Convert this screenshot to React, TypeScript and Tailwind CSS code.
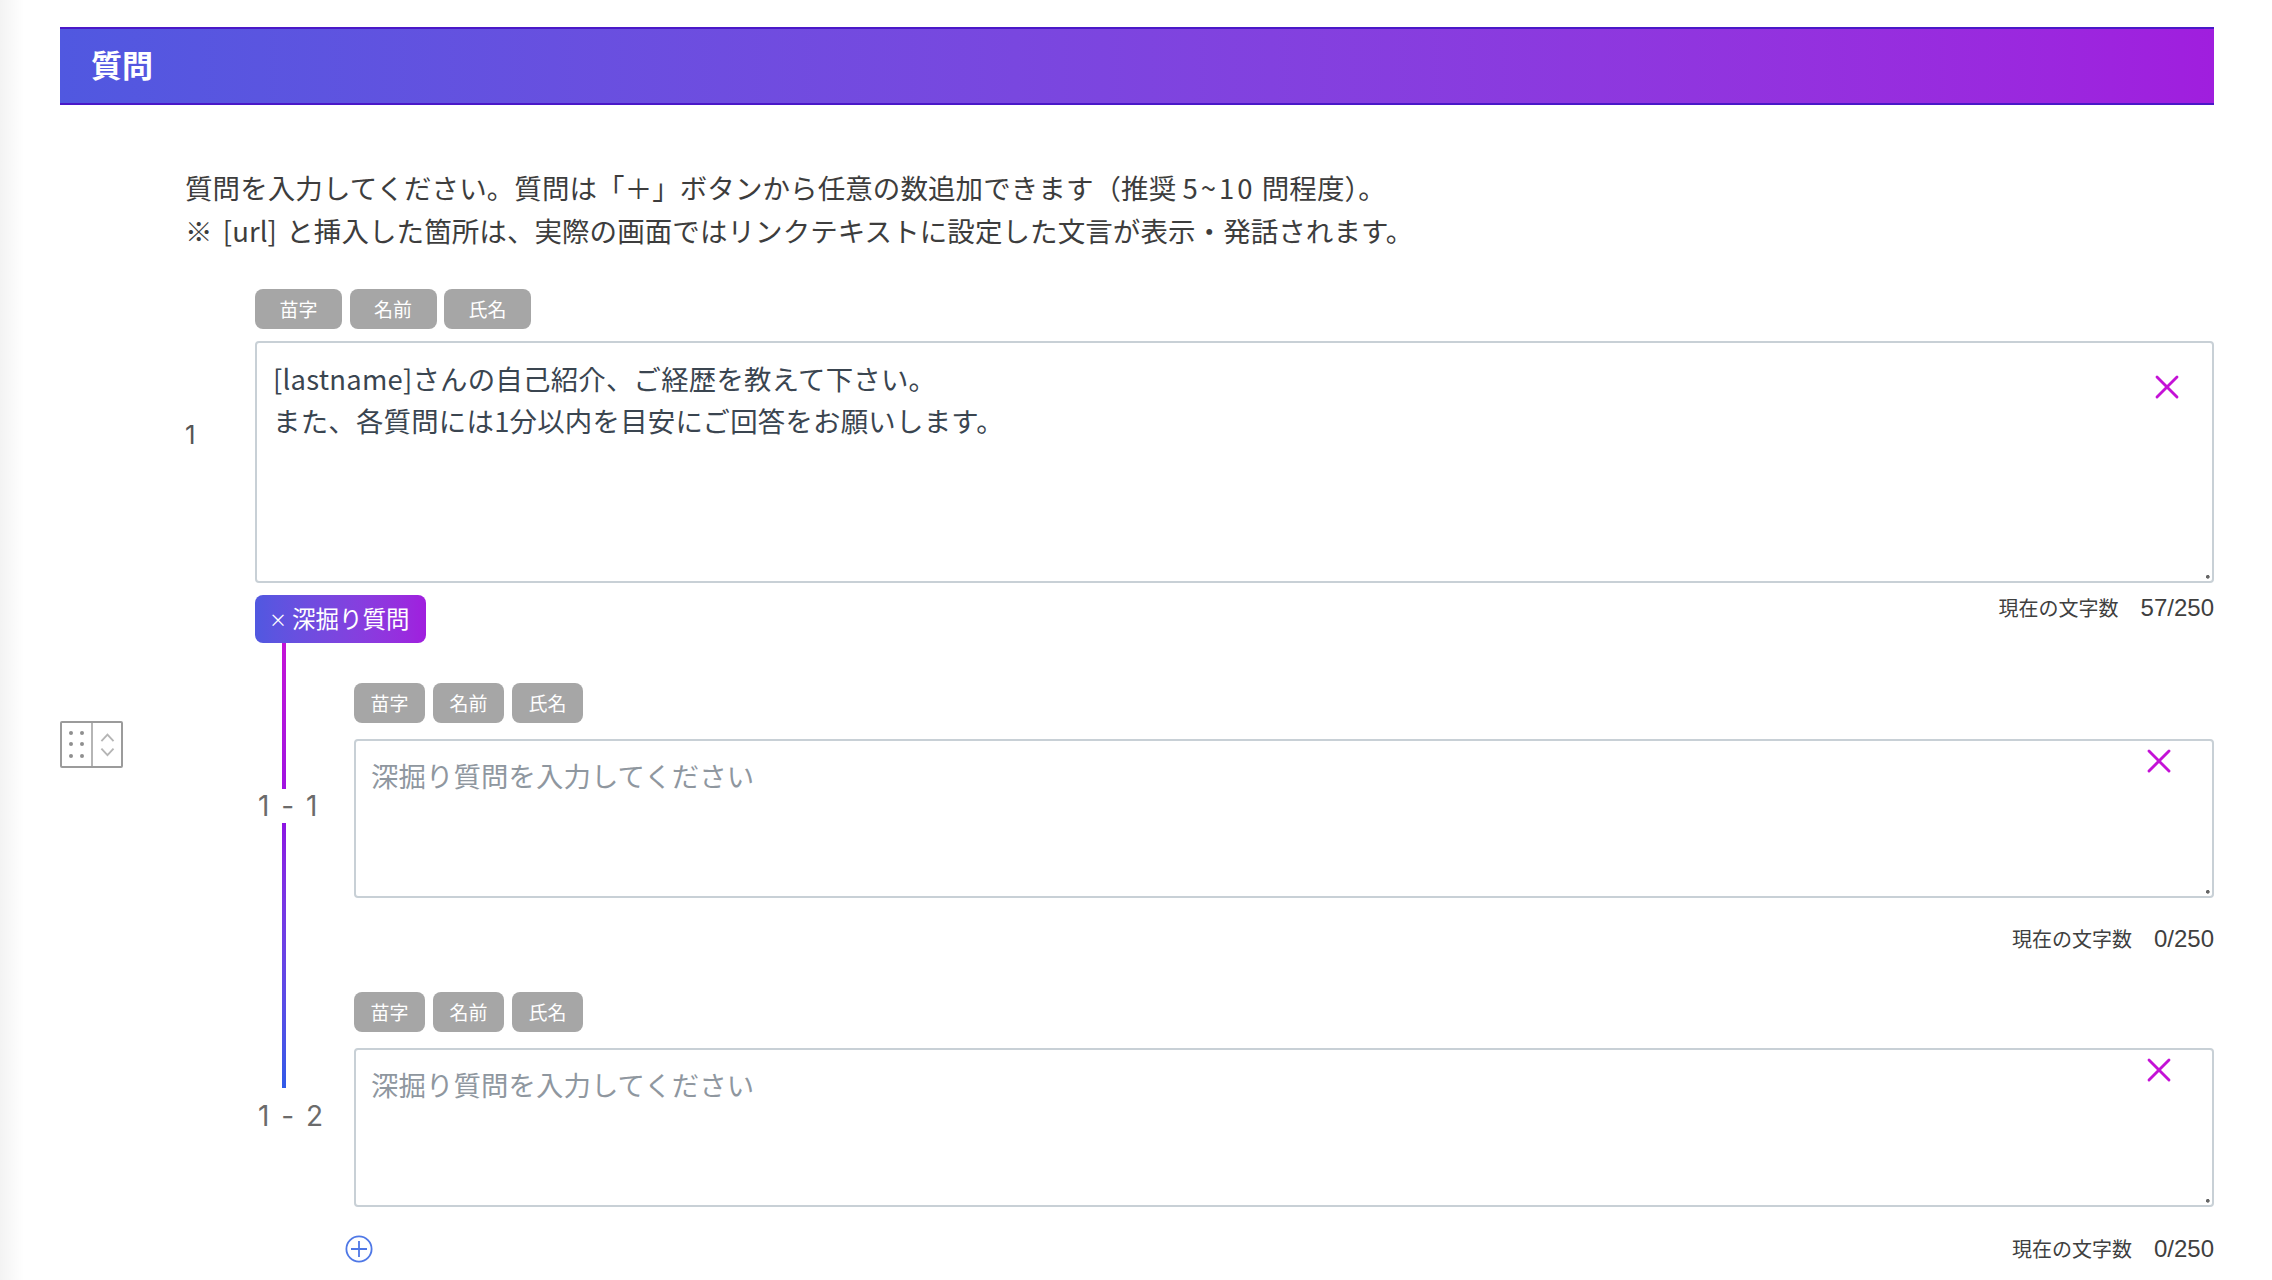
import { X } from "lucide-react";

const grip =
  "[&::-webkit-resizer]:bg-[radial-gradient(circle_at_72%_72%,#666_1.5px,transparent_2.2px)]";

function Tags({ wide }: { wide?: boolean }) {
  const size = wide ? "w-[87px]" : "w-[71px]";
  return (
    <div className={wide ? "flex gap-[7.5px]" : "flex gap-[8px]"}>
      {["苗字", "名前", "氏名"].map((t) => (
        <button
          key={t}
          className={`${size} flex h-[40px] items-center justify-center rounded-[8px] bg-[#a6a6a6] text-[19px] text-white`}
        >
          {t}
        </button>
      ))}
    </div>
  );
}

function Count({ n }: { n: number }) {
  return (
    <span className="flex items-center gap-[22px] text-[20px] leading-[26px] text-[#3f3f3f]">
      <span>現在の文字数</span>
      <span className="font-['Liberation_Sans',sans-serif] text-[24px]">{n}/250</span>
    </span>
  );
}

function SubQuestion({ last }: { last?: boolean }) {
  return (
    <div className="flex flex-col">
      <Tags />
      <div className="relative mt-[16px] h-[159px]">
        <textarea
          placeholder="深掘り質問を入力してください"
          className={`block h-full w-full resize-y rounded-[4px] border-2 border-[#c8d0d6] bg-white px-[15px] pt-[13px] text-[27.4px] leading-[42px] tracking-[0.1px] text-[#3a4550] outline-none placeholder:text-[#8f979f] ${grip}`}
        />
        <X className="absolute top-[2px] right-[35px] h-[40px] w-[40px] text-[#c412d6]" strokeWidth={1.7} />
      </div>
      <div className={`mt-[28px] flex items-center ${last ? "justify-between" : "justify-end"}`}>
        {last && (
          <svg viewBox="0 0 28 28" className="-ml-[9px] h-[28px] w-[28px] text-[#4f78e6]" fill="none" stroke="currentColor" strokeWidth="1.8">
            <circle cx="14" cy="14" r="12.6" />
            <path d="M14 6v16M6 14h16" />
          </svg>
        )}
        <Count n={0} />
      </div>
    </div>
  );
}

export default function App() {
  return (
    <div className="flex h-[1280px] w-[2272px] overflow-hidden bg-white font-['Noto_Sans_CJK_JP',sans-serif]">
      <div className="h-full w-[24px] shrink-0 bg-gradient-to-r from-[#f3f3f3] to-white" />
      <main className="flex-1 pt-[27px] pr-[58px] pl-[36px]">
        <header className="flex h-[78px] items-center border-y-2 border-[#4a18c8] bg-gradient-to-r from-[#5058e0] to-[#a01ede] pb-[4px] pl-[31px] text-[31px] font-bold text-white">
          質問
        </header>

        <p className="mt-[61px] pl-[125px] text-[27.5px] leading-[43px] tracking-[0.08px] text-[#3d3d3d]">
          質問を入力してください。質問は「＋」ボタンから任意の数追加できます（推奨 <span className="tracking-[3px]">5~10</span> 問程度）。
          <br />※ <span className="mr-[3px] ml-[4px]">[url]</span> と挿入した箇所は、実際の画面ではリンクテキストに設定した文言が表示・発話されます。
        </p>

        <div className="mt-[37px] flex">
          <div className="w-[125px] shrink-0">
            <div className="mt-[432px] flex h-[47px] w-[63px] rounded-[2px] border-2 border-[#9b9b9b]">
              <div className="grid w-[31px] grid-cols-2 place-items-center border-r-2 border-[#b5b5b5] px-[3px] py-[4px]">
                {[0, 1, 2, 3, 4, 5].map((i) => (
                  <span key={i} className="h-[4px] w-[4px] rounded-full bg-[#8f8f8f]" />
                ))}
              </div>
              <svg viewBox="0 0 30 43" className="h-[43px] w-[28px] text-[#b5b5b5]" fill="none" stroke="currentColor" strokeWidth="2">
                <path d="M9 18l6.500-7 6.500 7M9 26l6.500 7 6.500-7" />
              </svg>
            </div>
          </div>

          <div className="min-w-0 flex-1">
            <div className="flex items-center">
              <span className="w-[70px] shrink-0 pb-[3px] font-['Inter',sans-serif] text-[26px] text-[#555]">1</span>
              <div className="min-w-0 flex-1">
                <Tags wide />
                <div className="relative mt-[12px] h-[242px]">
                  <textarea
                    defaultValue={"[lastname]さんの自己紹介、ご経歴を教えて下さい。\nまた、各質問には1分以内を目安にご回答をお願いします。"}
                    className={`block h-full w-full resize-y rounded-[4px] border-2 border-[#c8d0d6] bg-white px-[16px] pt-[14px] text-[27.4px] leading-[42px] tracking-[0.25px] text-[#3a4550] outline-none ${grip}`}
                  />
                  <X className="absolute top-[26px] right-[27px] h-[40px] w-[40px] text-[#c412d6]" strokeWidth={1.7} />
                </div>
              </div>
            </div>

            <div className="mt-[12px] ml-[70px] flex items-start justify-between">
              <button className="flex h-[48px] w-[171px] items-center gap-[5px] rounded-[8px] bg-gradient-to-r from-[#5058e0] to-[#a01ede] pl-[14px] text-[23.5px] text-white">
                <span className="text-[18px]">×</span>
                <span>深掘り質問</span>
              </button>
              <Count n={57} />
            </div>

            <div className="ml-[70px] flex">
              <div className="flex w-[99px] shrink-0 flex-col">
                <div className="ml-[27px] h-[146px] w-[4px] bg-gradient-to-b from-[#c412d6] to-[#a012e0]" />
                <span className="h-[34px] pl-[3px] font-['Inter',sans-serif] text-[28px] leading-[34px] tracking-[2px] whitespace-pre text-[#6b6b6b]">1 - 1</span>
                <div className="ml-[27px] h-[265px] w-[4px] bg-gradient-to-b from-[#8c14e2] to-[#2f5ae8]" />
                <span className="mt-[11px] h-[34px] pl-[3px] font-['Inter',sans-serif] text-[28px] leading-[34px] tracking-[2px] whitespace-pre text-[#6b6b6b]">1 - 2</span>
              </div>
              <div className="mt-[40px] flex min-w-0 flex-1 flex-col gap-[40px]">
                <SubQuestion />
                <SubQuestion last />
              </div>
            </div>
          </div>
        </div>
      </main>
    </div>
  );
}
